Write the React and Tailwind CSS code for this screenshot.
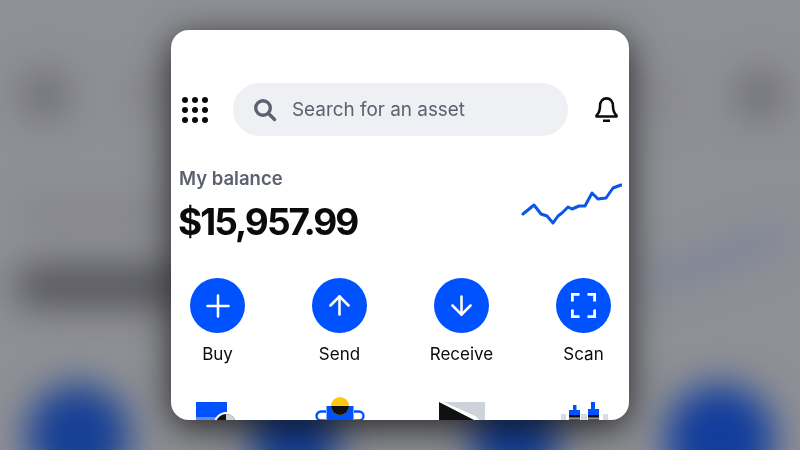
import { Plus, ArrowUp, ArrowDown } from 'lucide-react';

function ScanIcon() {
    return (
        <svg width="25" height="25" viewBox="0 0 25 25" fill="none" stroke="white" strokeWidth="2.800">
            <path d="M1.400 8.500V1.400H8.500M16.500 1.400H23.600V8.500M23.600 16.500V23.600H16.500M8.500 23.600H1.400V16.500" />
        </svg>
    );
}

const actions = [
    { label: 'Buy', icon: <Plus size={36} strokeWidth={1.700} /> },
    { label: 'Send', icon: <ArrowUp size={31} strokeWidth={2} /> },
    { label: 'Receive', icon: <ArrowDown size={31} strokeWidth={2} /> },
    { label: 'Scan', icon: <ScanIcon /> },
];

function DotGrid() {
    return (
        <div className="grid grid-cols-3 gap-x-[4px] gap-y-[4px] w-[26px]">
            {Array.from({ length: 9 }).map((_, i) => (
                <span key={i} className="w-[6px] h-[6px] rounded-full bg-[#0a0b0d]" />
            ))}
        </div>
    );
}

function SearchIcon() {
    return (
        <svg width="24" height="24" viewBox="0 0 24 24" fill="none" stroke="#5b616e" strokeWidth="3.400" strokeLinecap="round">
            <circle cx="10" cy="10" r="7.300" />
            <path d="M15.500 15.500L21.500 21.500" />
        </svg>
    );
}

function BellIcon() {
    return (
        <svg width="23" height="25" viewBox="0 0 23 25" fill="none" stroke="#0a0b0d" strokeWidth="2.600">
            <path d="M1.500 18.500C4 16 5 13.500 5 9.500C5 4 8 1.400 11.500 1.400S18 4 18 9.500C18 13.500 19 16 21.500 18.500V19.500H1.500Z" strokeLinejoin="round" />
            <path d="M8 23.800H15" />
        </svg>
    );
}

function Sparkline() {
    return (
        <svg width="102" height="44" viewBox="0 0 102 44" fill="none" className="mt-[17px]">
            <path
                d="M3 32 L14 23 L21 32 L27 34 L33 41 L38 34 L42 31 L48 25 L52 27 L59 24 L65 24 L72 11 L78 17 L86 16 L93 6 L101 3"
                stroke="#0a56e8"
                strokeWidth="3"
                strokeLinecap="round"
                strokeLinejoin="round"
            />
        </svg>
    );
}

const illustrations = [
    <svg key="card" width="42" height="24" viewBox="0 0 42 24" className="shrink-0 ml-[6px] mr-[7px]">
        <path d="M0 6H31V24H0Z" fill="#0052ff" />
        <path d="M0 21H31V24H0Z" fill="#5c8dff" />
        <circle cx="30" cy="28" r="12" fill="#fff" />
        <circle cx="30" cy="28" r="10" fill="#111" />
        <path d="M30 18A10 10 0 0 1 40 28H30Z" fill="#ced2db" />
    </svg>,
    <svg key="bag" width="50" height="24" viewBox="0 0 50 24" className="shrink-0">
        <path d="M11 15.500H6A4.500 4.500 0 0 0 6 24.500H11M39 15.500H44A4.500 4.500 0 0 1 44 24.500H39" fill="none" stroke="#0052ff" strokeWidth="2.400" />
        <path d="M11.500 10H38.500V24H11.500Z" fill="#0052ff" />
        <circle cx="25" cy="10" r="9" fill="#fdc90f" />
        <path d="M16 10A9 9 0 0 0 34 10Z" fill="#111" />
    </svg>,
    <svg key="wedge" width="46" height="24" viewBox="0 0 46 24" className="shrink-0">
        <path d="M0 6H46V24H0Z" fill="#ced2db" />
        <path d="M0 6H5L36 20C38 21 39 22 40 24H0Z" fill="#fff" />
        <path d="M0 6L35 24H0Z" fill="#111" />
    </svg>,
    <svg key="towers" width="48" height="24" viewBox="0 0 48 24" className="shrink-0">
        <path d="M1 18H6V24H1ZM21 18H27V24H21ZM43 18H48V24H43Z" fill="#d8dbe2" />
        <path d="M9 14H13V9H16.500V14H20V19H9ZM28 13H31V6H35V13H39V19H28Z" fill="#0052ff" />
        <path d="M9 19H20V24H9ZM28 19H39V24H28Z" fill="#111" />
        <path d="M9 21.500H20V23.500H9ZM28 21.500H39V23.500H28Z" fill="#999" />
    </svg>,
];

export default function App() {
    return (
        <div className="relative w-[800px] h-[450px] overflow-hidden bg-[#8f9095] flex items-center justify-center font-['Inter',sans-serif]">
            {/* blurred copy of the screen behind the card */}
            <div className="absolute inset-0 blur-[18px]">
                <div className="absolute left-[20px] top-[70px] w-[50px] h-[50px] rounded-full bg-[#6f7075]" />
                <div className="absolute left-[125px] top-[75px] w-[40px] h-[40px] rounded-full bg-[#838489]" />
                <div className="absolute left-[735px] top-[70px] w-[50px] h-[50px] rounded-full bg-[#6f7075]" />
                <div className="absolute left-[640px] top-[75px] w-[40px] h-[40px] rounded-full bg-[#86878e]" />
                <div className="absolute left-[20px] top-[205px] w-[150px] h-[20px] rounded-full bg-[#808187]" />
                <div className="absolute left-[14px] top-[265px] w-[170px] h-[42px] rounded-full bg-[#55565b]" />
                <div className="absolute left-[640px] top-[250px] w-[150px] h-[20px] rounded-full bg-[#77809a] -rotate-[20deg]" />
                <div className="absolute left-[26px] top-[384px] w-[104px] h-[104px] rounded-full bg-[#163f95]" />
                <div className="absolute left-[250px] top-[395px] w-[90px] h-[90px] rounded-full bg-[#163f95]" />
                <div className="absolute left-[470px] top-[395px] w-[90px] h-[90px] rounded-full bg-[#163f95]" />
                <div className="absolute left-[665px] top-[384px] w-[110px] h-[110px] rounded-full bg-[#123d9c]" />
            </div>

            <div className="relative w-[458px] h-[390px] bg-white rounded-[18px] overflow-hidden shadow-[0_8px_36px_rgba(0,0,0,0.75)] flex flex-col">
                <div className="flex items-center pt-[53px] pl-[11px] pr-[11px]">
                    <DotGrid />
                    <div className="ml-[25px] w-[335px] h-[53px] rounded-full bg-[#eef0f3] flex items-center pl-[20px]">
                        <SearchIcon />
                        <span className="ml-[15px] pt-[1px] text-[18.900px] text-[#5b616e]">Search for an asset</span>
                    </div>
                    <div className="ml-auto">
                        <BellIcon />
                    </div>
                </div>

                <div className="flex items-start justify-between pl-[8px] pr-[7px] mt-[29px]">
                    <div>
                        <div className="text-[18.500px] leading-[26px] font-semibold text-[#5b616e]">My balance</div>
                        <div className="mt-[9px] -ml-[1px] text-[37px] leading-[44px] font-bold tracking-[-2px] text-[#0a0b0d]">$15,957.99</div>
                    </div>
                    <Sparkline />
                </div>

                <div className="flex justify-between pl-[19px] pr-[18px] mt-[34px]">
                    {actions.map((a) => (
                        <div key={a.label} className="w-[55px] flex flex-col items-center">
                            <div className="w-[55px] h-[55px] rounded-full bg-[#0052ff] text-white flex items-center justify-center">
                                {a.icon}
                            </div>
                            <span className="mt-[10px] text-[17px] leading-[22px] text-[#0a0b0d] whitespace-nowrap">{a.label}</span>
                        </div>
                    ))}
                </div>

                <div className="flex justify-between pl-[19px] pr-[18px] h-[24px] mt-auto overflow-hidden">
                    {illustrations.map((svg) => (
                        <div key={svg.key} className="w-[55px] flex justify-center">
                            {svg}
                        </div>
                    ))}
                </div>
            </div>
        </div>
    );
}
